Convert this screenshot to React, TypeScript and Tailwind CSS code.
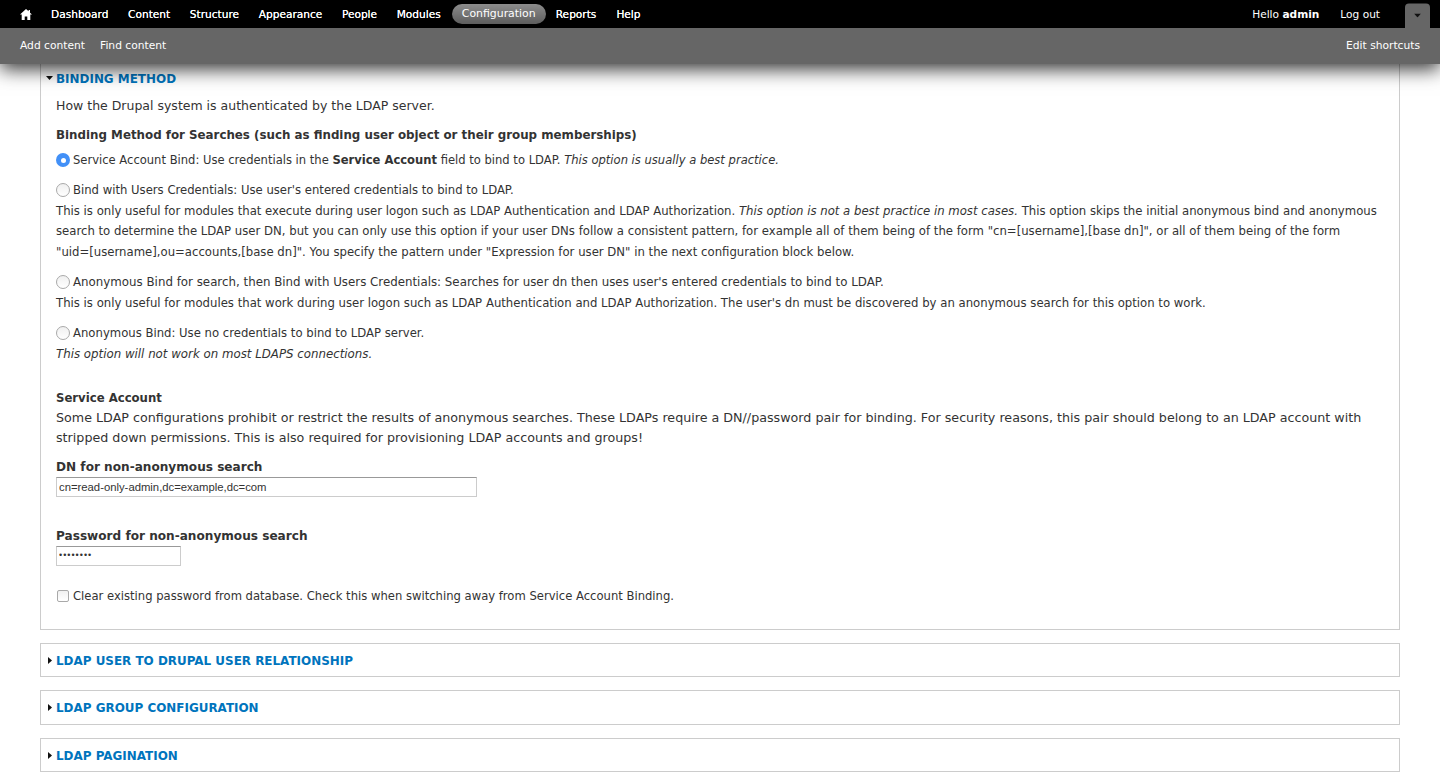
function Radio({ checked }: { checked?: boolean }) {
  return checked ? (
    <span className="mr-[3px] inline-flex h-[14px] w-[14px] shrink-0 items-center justify-center rounded-full bg-[#4290f7]">
      <span className="h-[5px] w-[5px] rounded-full bg-white" />
    </span>
  ) : (
    <span className="mr-[3px] inline-block h-[14px] w-[14px] shrink-0 rounded-full border border-[#a9a9a9] bg-gradient-to-b from-[#f0f0f0] to-white" />
  );
}

function Arrow({ open }: { open?: boolean }) {
  return open ? (
    <svg width="7" height="4" viewBox="0 0 7 4" className="absolute left-[5px] top-[16px]">
      <path d="M0 0h7L3.5 4z" fill="#111" />
    </svg>
  ) : (
    <svg width="4" height="7" viewBox="0 0 4 7" className="absolute left-[7px] top-[13px]">
      <path d="M0 0l4 3.5L0 7z" fill="#111" />
    </svg>
  );
}

function Collapsed({ title, height }: { title: string; height: string }) {
  return (
    <div className={`relative border border-[#ccc] ${height}`}>
      <Arrow />
      <a className="absolute left-[15px] top-[7px] text-[11.95px] font-bold leading-[20px] text-[#0074bd]">
        {title}
      </a>
    </div>
  );
}

function Toolbar() {
  const links = ["Dashboard", "Content", "Structure", "Appearance", "People", "Modules"];
  return (
    <div className="fixed inset-x-0 top-0 z-10 text-[10.7px] text-white shadow-[0_5px_18px_rgba(0,0,0,0.8)]">
      <div className="flex h-[28px] items-center bg-black pl-[20px] text-[10.6px]">
        <svg width="12" height="11" viewBox="0 0 12 11" className="mr-[19px]">
          <path d="M6 0L0 5.6h1.7V11h3V7.4h2.6V11h3V5.6H12L10 3.7V1H8.6v1.3z" fill="#fff" />
        </svg>
        <div className="flex items-center gap-[19.6px] [text-shadow:0_0_0.5px_#fff]">
          {links.map((l) => (
            <span key={l}>{l}</span>
          ))}
        </div>
        <span className="ml-[11px] flex h-[20px] w-[94px] items-center justify-center rounded-full bg-gradient-to-b from-[#8c8c8c] to-[#5e5e5e] text-[10.9px]">
          Configuration
        </span>
        <span className="ml-[10px] [text-shadow:0_0_0.5px_#fff]">Reports</span>
        <span className="ml-[20px] [text-shadow:0_0_0.5px_#fff]">Help</span>
        <div className="ml-auto flex items-center">
          <span>
            Hello <b>admin</b>
          </span>
          <span className="ml-[21px]">Log out</span>
          <span className="ml-[25px] mr-[10px] flex h-[25px] w-[25px] translate-y-[1.5px] items-center justify-center rounded-t-[4px] bg-[#666]">
            <svg width="7" height="4" viewBox="0 0 7 4">
              <path d="M0 0h7L3.5 4z" fill="#111" />
            </svg>
          </span>
        </div>
      </div>
      <div className="flex h-[36px] items-center justify-between bg-[#666] px-[20px]">
        <div className="flex gap-[15px]">
          <span>Add content</span>
          <span>Find content</span>
        </div>
        <span>Edit shortcuts</span>
      </div>
    </div>
  );
}

export default function App() {
  return (
    <div className="h-[774px] overflow-hidden bg-white font-['DejaVu_Sans',sans-serif] text-[11.7px] leading-[20.5px] text-[#333]">
      <Toolbar />
      <div className="px-[40px] pt-[60px]">
        <div className="relative h-[570px] border-x border-b border-[#ccc] px-[15px] pt-[9px]">
          <Arrow open />
          <a className="block text-[11.95px] font-bold leading-[20px] text-[#0074bd]">BINDING METHOD</a>
          <p className="mt-[7px] text-[12.5px]">How the Drupal system is authenticated by the LDAP server.</p>
          <p className="mt-[8px] text-[11.85px] font-bold">
            Binding Method for Searches (such as finding user object or their group memberships)
          </p>
          <div className="mt-[5px] flex items-center text-[11.55px]">
            <Radio checked />
            <span>
              Service Account Bind: Use credentials in the <b>Service Account</b> field to bind to LDAP.{" "}
              <i>This option is usually a best practice.</i>
            </span>
          </div>
          <div className="mt-[9px] flex items-center text-[11.65px]">
            <Radio />
            <span>Bind with Users Credentials: Use user's entered credentials to bind to LDAP.</span>
          </div>
          <p className="mt-[0.5px]">
            This is only useful for modules that execute during user logon such as LDAP Authentication and LDAP
            Authorization. <i>This option is not a best practice in most cases.</i> This option skips the initial
            anonymous bind and anonymous search to determine the LDAP user DN, but you can only use this option if your
            user DNs follow a consistent pattern, for example all of them being of the form "cn=[username],[base dn]",
            or all of them being of the form
            <br />
            "uid=[username],ou=accounts,[base dn]". You specify the pattern under "Expression for user DN" in the next
            configuration block below.
          </p>
          <div className="mt-[10px] flex items-center text-[11.83px]">
            <Radio />
            <span>
              Anonymous Bind for search, then Bind with Users Credentials: Searches for user dn then uses user's entered
              credentials to bind to LDAP.
            </span>
          </div>
          <p className="mt-[0.5px]">
            This is only useful for modules that work during user logon such as LDAP Authentication and LDAP
            Authorization. The user's dn must be discovered by an anonymous search for this option to work.
          </p>
          <div className="mt-[9px] flex items-center text-[11.66px]">
            <Radio />
            <span>Anonymous Bind: Use no credentials to bind to LDAP server.</span>
          </div>
          <p className="mt-[0.5px] text-[11.8px]">
            <i>This option will not work on most LDAPS connections.</i>
          </p>
          <p className="mt-[24px] text-[11.7px] font-bold">Service Account</p>
          <p className="mt-[-1px] text-[12.7px]">
            Some LDAP configurations prohibit or restrict the results of anonymous searches. These LDAPs require a
            DN//password pair for binding. For security reasons, this pair should belong to an LDAP account with
            stripped down permissions. This is also required for provisioning LDAP accounts and groups!
          </p>
          <p className="mt-[8px] text-[12.1px] font-bold">DN for non-anonymous search</p>
          <input
            readOnly
            value="cn=read-only-admin,dc=example,dc=com"
            className="block h-[20px] w-[421px] border border-[#ccc] border-t-[#999] px-[2px] font-['Liberation_Sans',sans-serif] text-[11.3px] text-[#333] outline-none"
          />
          <p className="mt-[29px] text-[12.1px] font-bold">Password for non-anonymous search</p>
          <input
            readOnly
            type="password"
            value="password"
            className="mt-[-1px] block h-[20px] w-[125px] border border-[#ccc] border-t-[#999] px-[2px] font-['Liberation_Sans',sans-serif] text-[9px] tracking-[1px] text-[#333] outline-none"
          />
          <div className="mt-[20px] flex items-center text-[11.6px]">
            <span className="ml-[1px] mr-[4px] h-[12px] w-[12px] rounded-[2px] border border-[#a9a9a9] bg-gradient-to-b from-[#f0f0f0] to-white" />
            <span>Clear existing password from database. Check this when switching away from Service Account Binding.</span>
          </div>
        </div>
        <div className="mt-[13px] flex flex-col gap-[13px]">
          <Collapsed title="LDAP USER TO DRUPAL USER RELATIONSHIP" height="h-[34px]" />
          <Collapsed title="LDAP GROUP CONFIGURATION" height="h-[35px]" />
          <Collapsed title="LDAP PAGINATION" height="h-[34px]" />
        </div>
      </div>
    </div>
  );
}
